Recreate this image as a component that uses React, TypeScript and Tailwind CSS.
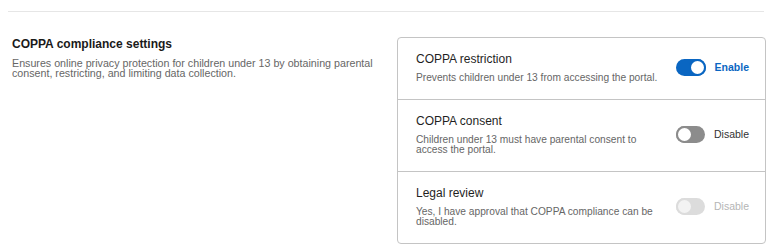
import { useState } from "react";

type Row = {
  title: string;
  desc: string;
  on: boolean;
  disabled?: boolean;
};

const rows: Row[] = [
  { title: "COPPA restriction", desc: "Prevents children under 13 from accessing the portal.", on: true },
  { title: "COPPA consent", desc: "Children under 13 must have parental consent to access the portal.", on: false },
  { title: "Legal review", desc: "Yes, I have approval that COPPA compliance can be disabled.", on: false, disabled: true },
];

const Toggle = ({ on, disabled }: { on: boolean; disabled?: boolean }) => {
  const track = on ? "bg-[#0a66c2]" : disabled ? "bg-[#dcdcdc]" : "bg-[#8c8c8c]";
  const knob = disabled ? "bg-[#f3f3f3] border-[#dcdcdc]" : on ? "bg-white border-[#0a66c2]" : "bg-white border-[#8c8c8c]";
  return (
    <div className={`w-[31px] h-[17px] rounded-full flex items-center ${track} ${on ? "justify-end" : "justify-start"}`}>
      <div className={`w-[17px] h-[17px] rounded-full border-2 ${knob}`} />
    </div>
  );
};

const SettingRow = ({ row, last }: { row: Row; last: boolean }) => {
  const [on] = useState(row.on);
  return (
    <div className={`flex items-center pl-[18px] pr-[16px] pt-[14px] pb-[15px] ${last ? "" : "border-b border-[#c4c4c4]"}`}>
      <div className="flex-1">
        <div className="text-[12px] leading-[15px] text-[#1f1f1f]">{row.title}</div>
        <div className="mt-[6px] text-[10.2px] leading-[10.6px] text-[#666666] max-w-[244px]">{row.desc}</div>
      </div>
      <div className="flex items-center gap-[9px] w-[73px]">
        <Toggle on={on} disabled={row.disabled} />
        <span
          className={`text-[10.5px] ${
            on ? "font-bold text-[#0a66c2]" : row.disabled ? "text-[#b5b5b5]" : "text-[#333333]"
          }`}
        >
          {on ? "Enable" : "Disable"}
        </span>
      </div>
    </div>
  );
};

export default function App() {
  return (
    <div className="w-[772px] h-[246px] bg-white pt-[11px] font-['Liberation_Sans',Arial,sans-serif]">
      <div className="mx-2 border-t border-[#e6e6e6]" />
      <div className="flex pt-[25px] pl-2 pr-[6px]">
        <div className="w-[389px] pl-1">
          <h2 className="text-[12px] leading-[15px] font-bold text-[#1a1a1a]">COPPA compliance settings</h2>
          <p className="mt-[6px] text-[10.7px] leading-[10px] text-[#666666] max-w-[365px]">
            Ensures online privacy protection for children under 13 by obtaining parental consent, restricting, and
            limiting data collection.
          </p>
        </div>
        <div className="flex-1 border border-[#c4c4c4] rounded-[4px]">
          {rows.map((r, i) => (
            <SettingRow key={r.title} row={r} last={i === rows.length - 1} />
          ))}
        </div>
      </div>
    </div>
  );
}
